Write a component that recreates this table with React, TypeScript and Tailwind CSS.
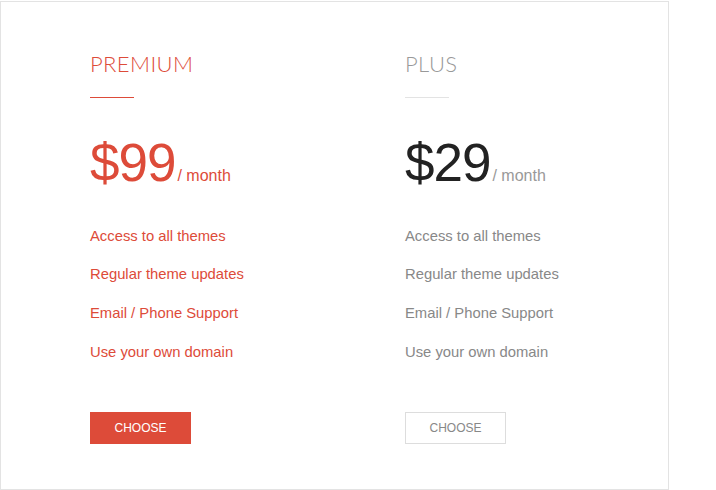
const plans = [
  {
    name: 'PREMIUM',
    price: '$99',
    features: ['Access to all themes', 'Regular theme updates', 'Email / Phone Support', 'Use your own domain'],
    featured: true,
  },
  {
    name: 'PLUS',
    price: '$29',
    features: ['Access to all themes', 'Regular theme updates', 'Email / Phone Support', 'Use your own domain'],
    featured: false,
  },
]

const PlanColumn = ({ plan }: { plan: (typeof plans)[number] }) => {
  const red = plan.featured
  return (
    <div className="flex flex-col">
      <h2
        className={`mt-[49px] text-[22px] leading-[26px] tracking-[0.4px] font-['Lato',sans-serif] font-light ${red ? 'text-[#dd4b39]' : 'text-[#999]'}`}
      >
        {plan.name}
      </h2>
      <div className={`mt-[20px] h-px w-[44px] ${red ? 'bg-[#dd4b39]' : 'bg-[#e3e3e3]'}`} />
      <div className="mt-[38px] flex items-baseline h-[54px]">
        <span
          className={`text-[53px] leading-[54px] tracking-[-1px] ${red ? 'text-[#dd4b39]' : 'text-[#222]'}`}
        >
          {plan.price}
        </span>
        <span className={`ml-[2px] text-[16px] ${red ? 'text-[#dd4b39]' : 'text-[#999]'}`}>/ month</span>
      </div>
      <ul className="mt-[26.5px]">
        {plan.features.map((f) => (
          <li
            key={f}
            className={`text-[14.8px] leading-[38.67px] ${red ? 'text-[#dd4b39]' : 'text-[#888]'}`}
          >
            {f}
          </li>
        ))}
      </ul>
      <button
        className={`mt-[41px] w-[101px] h-[32px] text-[12px] ${
          red ? 'bg-[#dd4b39] text-white' : 'border border-[#ddd] text-[#888] bg-white'
        }`}
      >
        CHOOSE
      </button>
    </div>
  )
}

export default function App() {
  return (
    <div className="w-[716px] h-[490px] bg-white font-['Liberation_Sans',Arial,sans-serif]">
      <div className="mt-px w-[669px] h-[489px] border border-[#e3e3e3] pl-[89px] grid grid-cols-[315px_315px]">
        {plans.map((p) => (
          <PlanColumn key={p.name} plan={p} />
        ))}
      </div>
    </div>
  )
}
